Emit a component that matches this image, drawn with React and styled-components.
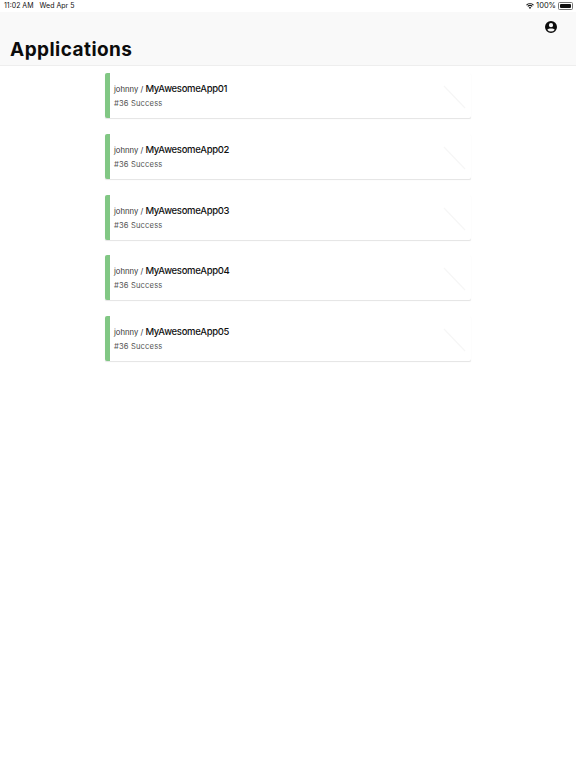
import styled, { createGlobalStyle } from "styled-components"

const apps = ["MyAwesomeApp01", "MyAwesomeApp02", "MyAwesomeApp03", "MyAwesomeApp04", "MyAwesomeApp05"]

const Global = createGlobalStyle`
    html, body {
        margin: 0;
        background-color: #fff;
        font-family: Inter, "Liberation Sans", sans-serif;
    }
`

const WifiIcon = () => (
    <svg width="8" height="6" viewBox="0 0 18 14">
        <path fill="#111" d="M9 14 6 10.6a4.4 4.4 0 0 1 6 0zM4.6 9 2.800 7a9.200 9.200 0 0 1 12.400 0l-1.800 2a6.600 6.600 0 0 0-8.800 0zM1.500 5.600 0 3.900a13.400 13.400 0 0 1 18 0l-1.500 1.700a11.200 11.200 0 0 0-15 0z" />
    </svg>
)

const ProfileIcon = () => (
    <svg width="12" height="12" viewBox="0 0 24 24">
        <path fill="#0c0c0c" d="M12 0a12 12 0 1 0 0 24 12 12 0 0 0 0-24zm0 4.200a4.200 4.200 0 1 1 0 8.400 4.200 4.200 0 0 1 0-8.400zm0 17a9.400 9.400 0 0 1-7.400-3.700c.9-1.700 4.200-2.700 7.400-2.700s6.500 1 7.400 2.700A9.400 9.400 0 0 1 12 21.200z" />
    </svg>
)

const Watermark = () => (
    <svg width="23" height="24" viewBox="0 0 23 24">
        <path d="M1 1 22 23" stroke="#f6f6f6" strokeWidth="1.2" fill="none" />
    </svg>
)

export default function App() {
    return (
        <Page>
            <Global />
            <StatusBar>
                <Clock>
                    <span>11:02 AM</span>
                    <span>Wed Apr 5</span>
                </Clock>
                <Indicators>
                    <WifiIcon />
                    <span>100%</span>
                    <Battery><BatteryLevel /></Battery>
                </Indicators>
            </StatusBar>
            <Header>
                <ProfileButton><ProfileIcon /></ProfileButton>
                <Title>Applications</Title>
            </Header>
            <List>
                {apps.map(name => (
                    <Card key={name}>
                        <CardBody>
                            <Heading>
                                <Owner>johnny / </Owner>
                                <Name>{name}</Name>
                            </Heading>
                            <Build>#36 Success</Build>
                        </CardBody>
                        <Mark><Watermark /></Mark>
                    </Card>
                ))}
            </List>
        </Page>
    )
}

const Page = styled.div`
    display: flex;
    flex-direction: column;
    width: 576px;
    height: 768px;
    overflow: hidden;
    background-color: #fff;
`
const StatusBar = styled.div`
    display: flex;
    justify-content: space-between;
    align-items: center;
    height: 12px;
    padding: 0 3px 1px 4px;
    box-sizing: border-box;
    font-size: 7px;
    color: #111;
`
const Clock = styled.div`
    display: flex;
    gap: 6px;
`
const Indicators = styled.div`
    display: flex;
    align-items: center;
    gap: 2px;
    font-size: 7.500px;
`
const Battery = styled.div`
    width: 11px;
    height: 4px;
    padding: 1px;
    border: 0.5px solid #777;
    border-radius: 1.500px;
    box-sizing: content-box;
    display: flex;
`
const BatteryLevel = styled.div`
    flex: 1;
    background-color: #111;
    border-radius: 1px;
`
const Header = styled.header`
    display: flex;
    flex-direction: column;
    height: 54px;
    padding: 0 19px 0 10px;
    box-sizing: border-box;
    background-color: #f9f9f9;
    border-bottom: 1px solid #eeeeee;
`
const ProfileButton = styled.div`
    display: flex;
    justify-content: flex-end;
    padding-top: 9px;
    height: 12px;
`
const Title = styled.h1`
    margin: 5px 0 0;
    font-size: 19px;
    line-height: 24px;
    font-weight: 700;
    letter-spacing: 0.45px;
    color: #0c0c0c;
`
const List = styled.main`
    display: flex;
    flex-direction: column;
    gap: 15.750px;
    width: 366px;
    margin: 7px 0 0 105px;
`
const Card = styled.article`
    display: flex;
    justify-content: space-between;
    height: 45px;
    box-sizing: border-box;
    background-color: #fff;
    border-left: 5px solid #81c784;
    border-radius: 2px;
    box-shadow: 0 1px 1px -0.5px rgba(0, 0, 0, 0.11);
`
const CardBody = styled.div`
    padding: 9px 0 0 4px;
`
const Heading = styled.div`
    display: flex;
    align-items: baseline;
    white-space: pre;
    height: 14px;
    line-height: 14px;
`
const Owner = styled.span`
    font-size: 7.700px;
    color: #333;
`
const Name = styled.span`
    font-size: 9.500px;
    font-weight: 500;
    letter-spacing: -0.3px;
    color: #111;
`
const Build = styled.div`
    margin-top: 2px;
    font-size: 7.600px;
    line-height: 12px;
    letter-spacing: 0.15px;
    color: #555;
`
const Mark = styled.div`
    display: flex;
    align-items: flex-end;
    padding: 0 5px 9px 0;
`
